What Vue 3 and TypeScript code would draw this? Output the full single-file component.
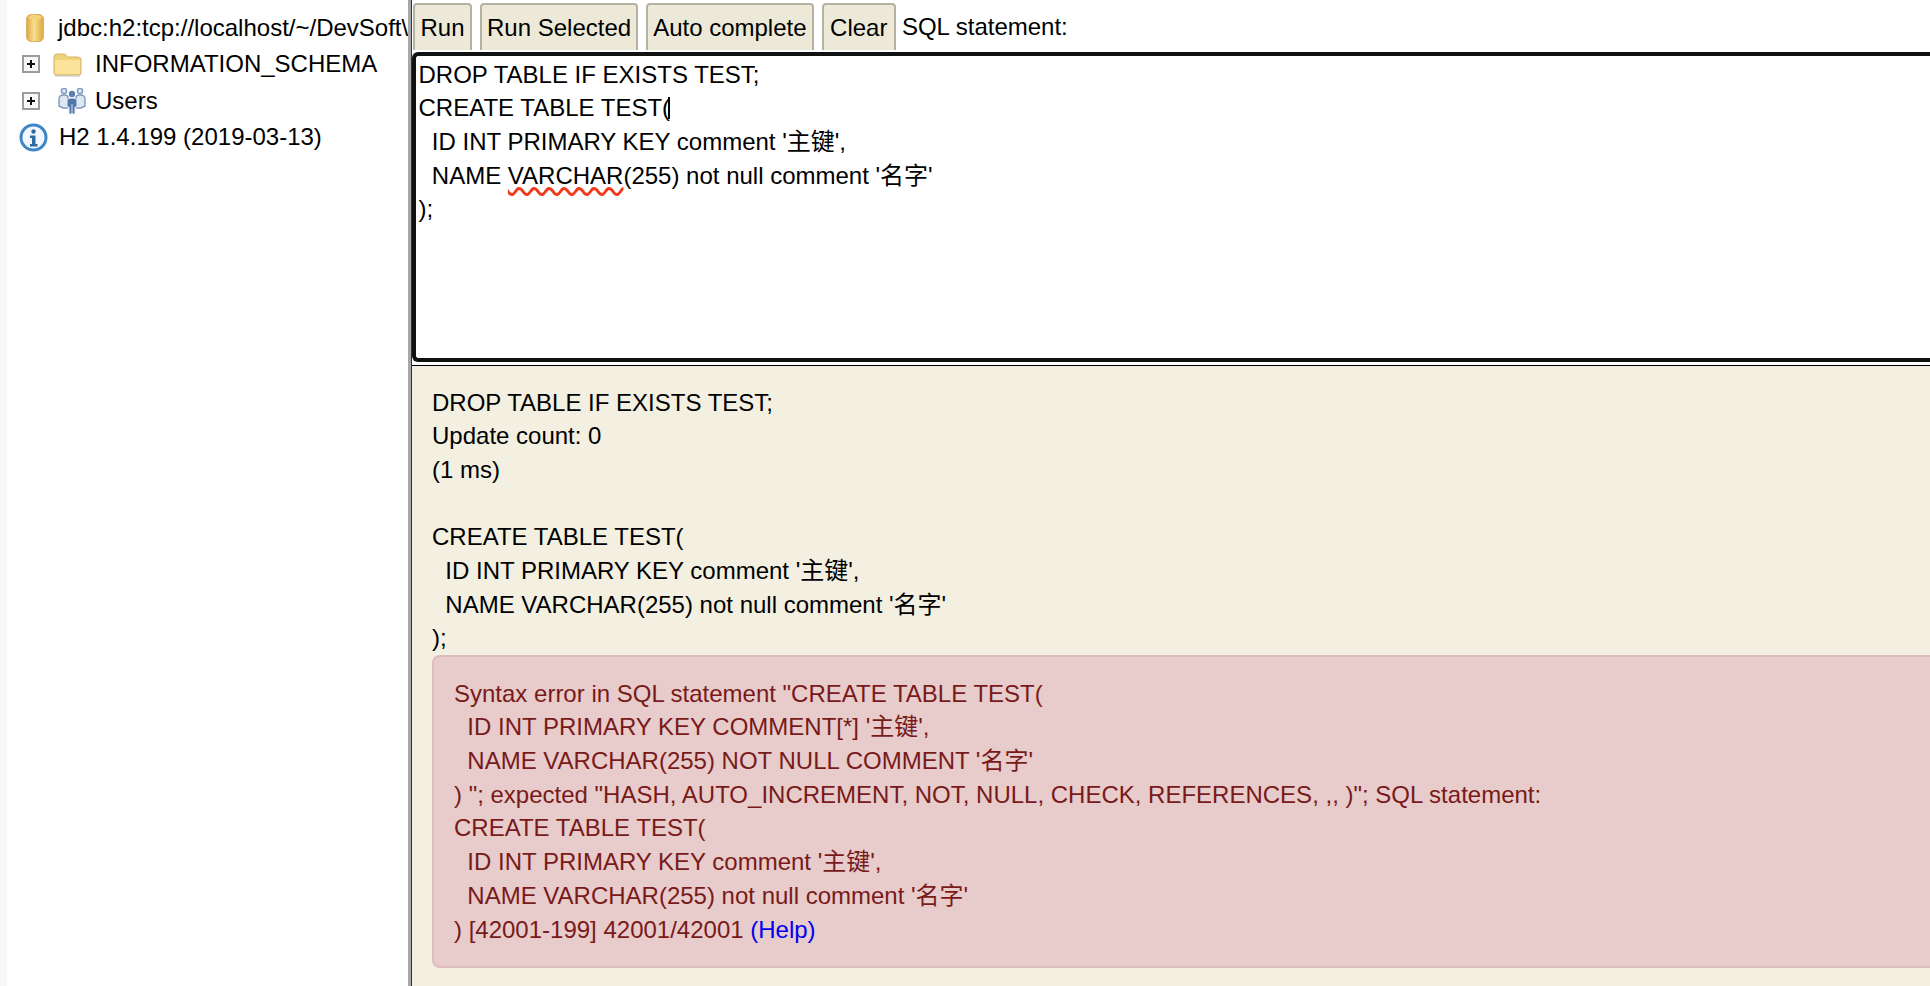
<script setup lang="ts">
const tools: string[] = ['Run', 'Run Selected', 'Auto complete', 'Clear']
</script>

<template>
  <div class="page">
    <aside class="tree">
      <div class="row root">
        <svg class="i-db" width="18" height="28" viewBox="0 0 18 28">
          <defs>
            <linearGradient id="dbg" x1="0" x2="1" y1="0" y2="0">
              <stop offset="0" stop-color="#d9a644" />
              <stop offset=".45" stop-color="#f8e08f" />
              <stop offset="1" stop-color="#dba83f" />
            </linearGradient>
          </defs>
          <rect x=".5" y=".5" width="17" height="27" rx="4.5" fill="url(#dbg)" stroke="#dcb160" />
          <ellipse cx="9" cy="3.5" rx="7" ry="2" fill="#f3d27c" />
        </svg>
        <span class="clip">jdbc:h2:tcp://localhost/~/DevSoft\</span>
      </div>
      <div class="row folder">
        <svg class="i-plus" width="18" height="18" viewBox="0 0 18 18">
          <rect x="1" y="1" width="16" height="16" fill="#f8f8f8" stroke="#9c9c9c" stroke-width="2" />
          <path d="M5 9h8M9 5v8" stroke="#111" stroke-width="2" />
        </svg>
        <svg class="i-folder" width="29" height="25" viewBox="0 0 29 25">
          <path d="M1 21V5q0-3 3-3h7q2 0 3 3h11q3 0 3 3v13q0 2-2 2H3q-2 0-2-2z" fill="#f0d27a" stroke="#d3b469" />
          <path d="M2 8h25v14H2z" fill="#fbe39a" />
          <path d="M2 24h25" stroke="#bfbfbf" />
        </svg>
        <span>INFORMATION_SCHEMA</span>
      </div>
      <div class="row users">
        <svg class="i-plus" width="18" height="18" viewBox="0 0 18 18">
          <rect x="1" y="1" width="16" height="16" fill="#f8f8f8" stroke="#9c9c9c" stroke-width="2" />
          <path d="M5 9h8M9 5v8" stroke="#111" stroke-width="2" />
        </svg>
        <svg class="i-users" width="28" height="29" viewBox="0 0 28 29">
          <circle cx="6" cy="5" r="2.6" fill="#dbe4f0" stroke="#7f9bc2" stroke-width="1.4" />
          <circle cx="22" cy="5" r="2.6" fill="#dbe4f0" stroke="#7f9bc2" stroke-width="1.4" />
          <path d="M1 20v-7q0-4 5-4t4 4v9H5zM27 20v-7q0-4-5-4t-4 4v9h5z" fill="#dfe7f2" stroke="#7f9bc2" stroke-width="1.4" />
          <circle cx="14" cy="8" r="3.2" fill="#5c80b3" />
          <path d="M9 15q0-3 5-3t5 3v6h-2v7h-6v-7H9z" fill="#4f76ad" stroke="#e7edf5" />
          <path d="M14 18v10" stroke="#dfe7f2" />
        </svg>
        <span>Users</span>
      </div>
      <div class="row info">
        <svg class="i-info" width="29" height="29" viewBox="0 0 29 29">
          <circle cx="14.5" cy="14.5" r="12.5" fill="#f3f7fc" stroke="#3e86c6" stroke-width="3" />
          <circle cx="14.5" cy="8.5" r="2.2" fill="#2c6aa4" />
          <path d="M11 12.5h5.5v8.5h2v2.5h-7.5V21h2v-6h-2z" fill="#2c6aa4" />
        </svg>
        <span>H2 1.4.199 (2019-03-13)</span>
      </div>
    </aside>

    <main class="main">
      <div class="toolbar">
        <button v-for="t in tools" :key="t" class="btn" type="button">{{ t }}</button>
        <span class="label">SQL statement:</span>
      </div>
      <div class="editor">
        <div>DROP TABLE IF EXISTS TEST;</div>
        <div>CREATE TABLE TEST(<i class="caret"></i></div>
        <div>&nbsp;&nbsp;ID INT PRIMARY KEY comment '主键',</div>
        <div>&nbsp;&nbsp;NAME <span class="spell">VARCHAR</span>(255) not null comment '名字'</div>
        <div>);</div>
      </div>
      <div class="result">
        <div class="log">
          <div>DROP TABLE IF EXISTS TEST;</div>
          <div>Update count: 0</div>
          <div>(1 ms)</div>
          <div>&nbsp;</div>
          <div>CREATE TABLE TEST(</div>
          <div>&nbsp;&nbsp;ID INT PRIMARY KEY comment '主键',</div>
          <div>&nbsp;&nbsp;NAME VARCHAR(255) not null comment '名字'</div>
          <div>);</div>
        </div>
        <div class="error">
          <div>Syntax error in SQL statement "CREATE TABLE TEST(</div>
          <div>&nbsp;&nbsp;ID INT PRIMARY KEY COMMENT[*] '主键',</div>
          <div>&nbsp;&nbsp;NAME VARCHAR(255) NOT NULL COMMENT '名字'</div>
          <div>) "; expected "HASH, AUTO_INCREMENT, NOT, NULL, CHECK, REFERENCES, ,, )"; SQL statement:</div>
          <div>CREATE TABLE TEST(</div>
          <div>&nbsp;&nbsp;ID INT PRIMARY KEY comment '主键',</div>
          <div>&nbsp;&nbsp;NAME VARCHAR(255) not null comment '名字'</div>
          <div>) [42001-199] 42001/42001 <a class="help">(Help)</a></div>
        </div>
      </div>
    </main>
  </div>
</template>

<style>
html, body { margin: 0; padding: 0; background: #fff; overflow: hidden; }
</style>

<style scoped>
.page {
  display: flex;
  width: 1930px;
  height: 986px;
  overflow: hidden;
  font-family: "Liberation Sans", "Noto Sans CJK SC", sans-serif;
  font-size: 24px;
  color: #000;
  background: #fff;
}
.tree {
  width: 411px;
  flex: none;
  padding-top: 10px;
  box-sizing: border-box;
  background: linear-gradient(90deg, #f8f8f8 0 7px, #fff 7px);
  border-right: 3px solid #a8a8a8;
  overflow: hidden;
  white-space: nowrap;
}
.row { display: flex; align-items: center; height: 36.3px; }
.i-db { margin-left: 26px; margin-right: 14px; flex: none; }
.i-plus { margin-left: 22px; flex: none; }
.i-folder { margin-left: 13px; margin-right: 13px; flex: none; }
.i-users { margin-left: 18px; margin-right: 9px; flex: none; }
.i-info { margin-left: 19px; margin-right: 11px; flex: none; }
.main {
  flex: 1;
  min-width: 0;
  display: flex;
  flex-direction: column;
  border-left: 1px solid #333;
}
.toolbar {
  height: 52px;
  flex: none;
  display: flex;
  align-items: flex-start;
  padding: 3px 0 0 1px;
  box-sizing: border-box;
  gap: 8px;
}
.btn {
  height: 47px;
  padding: 0 5.5px;
  margin: 0;
  font: inherit;
  color: #000;
  background: #ece9d8;
  border: 2px solid #b5b2a2;
  border-bottom: none;
  border-radius: 4px 4px 0 0;
}
.btn:nth-child(2), .btn:nth-child(3) { padding: 0 5px; }
.btn:nth-child(4) { padding: 0 6.5px; }
.label { line-height: 48px; margin-left: -2px; }
.editor {
  height: 310px;
  flex: none;
  box-sizing: border-box;
  border: 4px solid #111;
  border-right: none;
  border-radius: 6px 0 0 6px;
  padding: 1.5px 0 0 2.5px;
  line-height: 33.7px;
  white-space: pre;
}
.caret { display: inline-block; width: 2px; height: 22px; background: #000; vertical-align: -3px; margin-left: -2px; }
.spell {
  text-decoration: underline wavy #f03a1c 3px;
  text-underline-offset: 3px;
}
.result {
  flex: 1;
  min-height: 0;
  margin-top: 3px;
  border-top: 1px solid #000;
  background: #f3efe1;
  padding: 19.5px 0 0 20px;
  line-height: 33.7px;
}
.error {
  height: 313px;
  margin-top: -0.5px;
  box-sizing: border-box;
  padding: 20px 0 0 20px;
  border: 2px solid #ddbcbc;
  border-right: none;
  border-radius: 8px 0 0 8px;
  background: #e8cbcb;
  color: #791a1a;
}
.help { color: #0000ee; }
</style>
